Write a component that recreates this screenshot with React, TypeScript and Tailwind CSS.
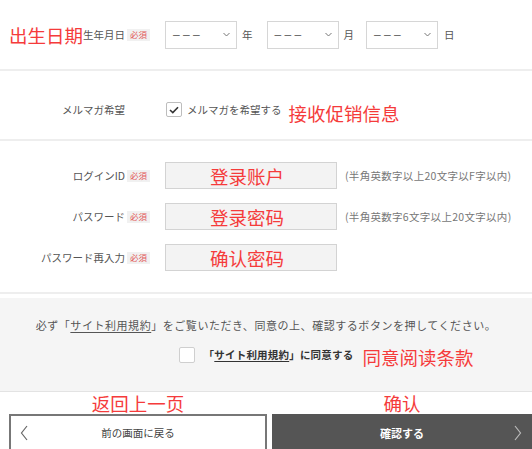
import React from "react";

const red = "font-['Noto_Sans_CJK_SC',sans-serif] text-[#f53b3b] text-[18.5px] leading-[22px] whitespace-nowrap";

function Badge() {
  return (
    <span className="flex h-[12px] w-[23px] items-center justify-center bg-[#f1f1f1] text-[8.5px] leading-none text-[#e25a5a]">
      必須
    </span>
  );
}

function Label({ text, required, note }: { text: string; required?: boolean; note?: string }) {
  return (
    <div className="flex w-[150px] shrink-0 items-center justify-end">
      {note && <span className={red}>{note}</span>}
      <span className="whitespace-nowrap text-[10.5px] text-[#555]">{text}</span>
      <span className="ml-[2px] flex w-[23px] shrink-0">{required && <Badge />}</span>
    </div>
  );
}

function Select() {
  return (
    <div className="flex h-[28px] w-[72px] items-center justify-between border border-[#d6d6d6] bg-white pl-[7px] pr-[6px]">
      <span className="font-['Liberation_Sans',sans-serif] text-[12px] tracking-[0px] text-[#666]">– – –</span>
      <svg width="7" height="5" viewBox="0 0 7 5">
        <path d="M0.5 1 L3.5 4 L6.5 1" fill="none" stroke="#777" strokeWidth="1" />
      </svg>
    </div>
  );
}

function Divider() {
  return <div className="h-[2px] bg-[#eeeeee]" />;
}

function Field({ label, note, hint }: { label: string; note: string; hint?: string }) {
  return (
    <div className="flex h-[41px] items-center">
      <Label text={label} required />
      <div className="ml-[15px] flex h-[27px] w-[172px] items-center justify-center border border-[#d3d3d3] bg-[#f3f3f3] pr-[8px]">
        <span className={red}>{note}</span>
      </div>
      {hint && (
        <span className="ml-[8px] whitespace-nowrap text-[10.5px] tracking-[0.3px] text-[#777]">{hint}</span>
      )}
    </div>
  );
}

export default function App() {
  return (
    <div className="h-[449px] w-[532px] overflow-hidden bg-white font-['Noto_Sans_CJK_JP',sans-serif] text-[#555]">
      <div className="flex h-[69px] items-center">
        <Label text="生年月日" required note="出生日期" />
        <div className="ml-[15px] flex items-center text-[10.5px] text-[#555]">
          <Select />
          <span className="ml-[5px] mr-[14px]">年</span>
          <Select />
          <span className="ml-[5px] mr-[12px]">月</span>
          <Select />
          <span className="ml-[6px]">日</span>
        </div>
      </div>
      <Divider />

      <div className="flex h-[68px] items-center pt-[9px]">
        <Label text="メルマガ希望" />
        <div className="ml-[16px] flex items-center">
          <span className="flex h-[15px] w-[16px] items-center justify-center rounded-[2px] border border-[#bdbdbd] bg-white">
            <svg width="10" height="8" viewBox="0 0 10 8">
              <path d="M1 4 L3.8 6.6 L9 1.2" fill="none" stroke="#333" strokeWidth="1.6" />
            </svg>
          </span>
          <span className="ml-[5px] whitespace-nowrap text-[10.5px] text-[#555]">メルマガを希望する</span>
          <span className={`${red} ml-[7px] mt-[7px]`}>接收促销信息</span>
        </div>
      </div>
      <Divider />

      <div className="pb-[14px] pt-[14px]">
        <Field label="ログインID" note="登录账户" hint="(半角英数字以上20文字以F字以内)" />
        <Field label="パスワード" note="登录密码" hint="(半角英数字6文字以上20文字以内)" />
        <Field label="パスワード再入力" note="确认密码" />
      </div>
      <Divider />

      <div className="mt-[4px] flex h-[94px] flex-col items-center border-b border-[#e3e3e3] bg-[#f5f5f5]">
        <p className="pt-[20px] text-[11px] leading-[14px] tracking-[0.55px] text-[#555]">
          必ず「<span className="underline underline-offset-2">サイト利用規約</span>」をご覧いただき、同意の上、確認するボタンを押してください。
        </p>
        <div className="relative mt-[13px] flex h-[20px] items-center">
          <span className="h-[16px] w-[16px] rounded-[2px] border border-[#cfcfcf] bg-white" />
          <span className="ml-[9px] whitespace-nowrap text-[10.5px] font-bold tracking-[0.2px] text-[#333]">
            「<span className="underline underline-offset-2">サイト利用規約</span>」に同意する
          </span>
          <span className={`${red} absolute left-full top-[1px] ml-[9px]`}>同意阅读条款</span>
        </div>
      </div>

      <div className="flex h-[22px] items-center pl-[9px]">
        <div className="flex w-[258px] justify-center">
          <span className={red}>返回上一页</span>
        </div>
        <div className="ml-[5px] flex flex-1 justify-center">
          <span className={red}>确认</span>
        </div>
      </div>

      <div className="flex gap-[5px] pl-[9px]">
        <button className="flex h-[38px] w-[258px] items-center justify-between border-2 border-[#777] bg-white px-[9px]">
          <svg width="8" height="16" viewBox="0 0 8 16">
            <path d="M7 1 L1.5 8 L7 15" fill="none" stroke="#666" strokeWidth="1.2" />
          </svg>
          <span className="text-[10.5px] text-[#444]">前の画面に戻る</span>
          <span className="w-[8px]" />
        </button>
        <button className="flex h-[38px] flex-1 items-center justify-between bg-[#555] px-[10px]">
          <span className="w-[8px]" />
          <span className="text-[11px] font-bold text-white">確認する</span>
          <svg width="8" height="16" viewBox="0 0 8 16">
            <path d="M1 1 L6.5 8 L1 15" fill="none" stroke="#bbb" strokeWidth="1.2" />
          </svg>
        </button>
      </div>
    </div>
  );
}
